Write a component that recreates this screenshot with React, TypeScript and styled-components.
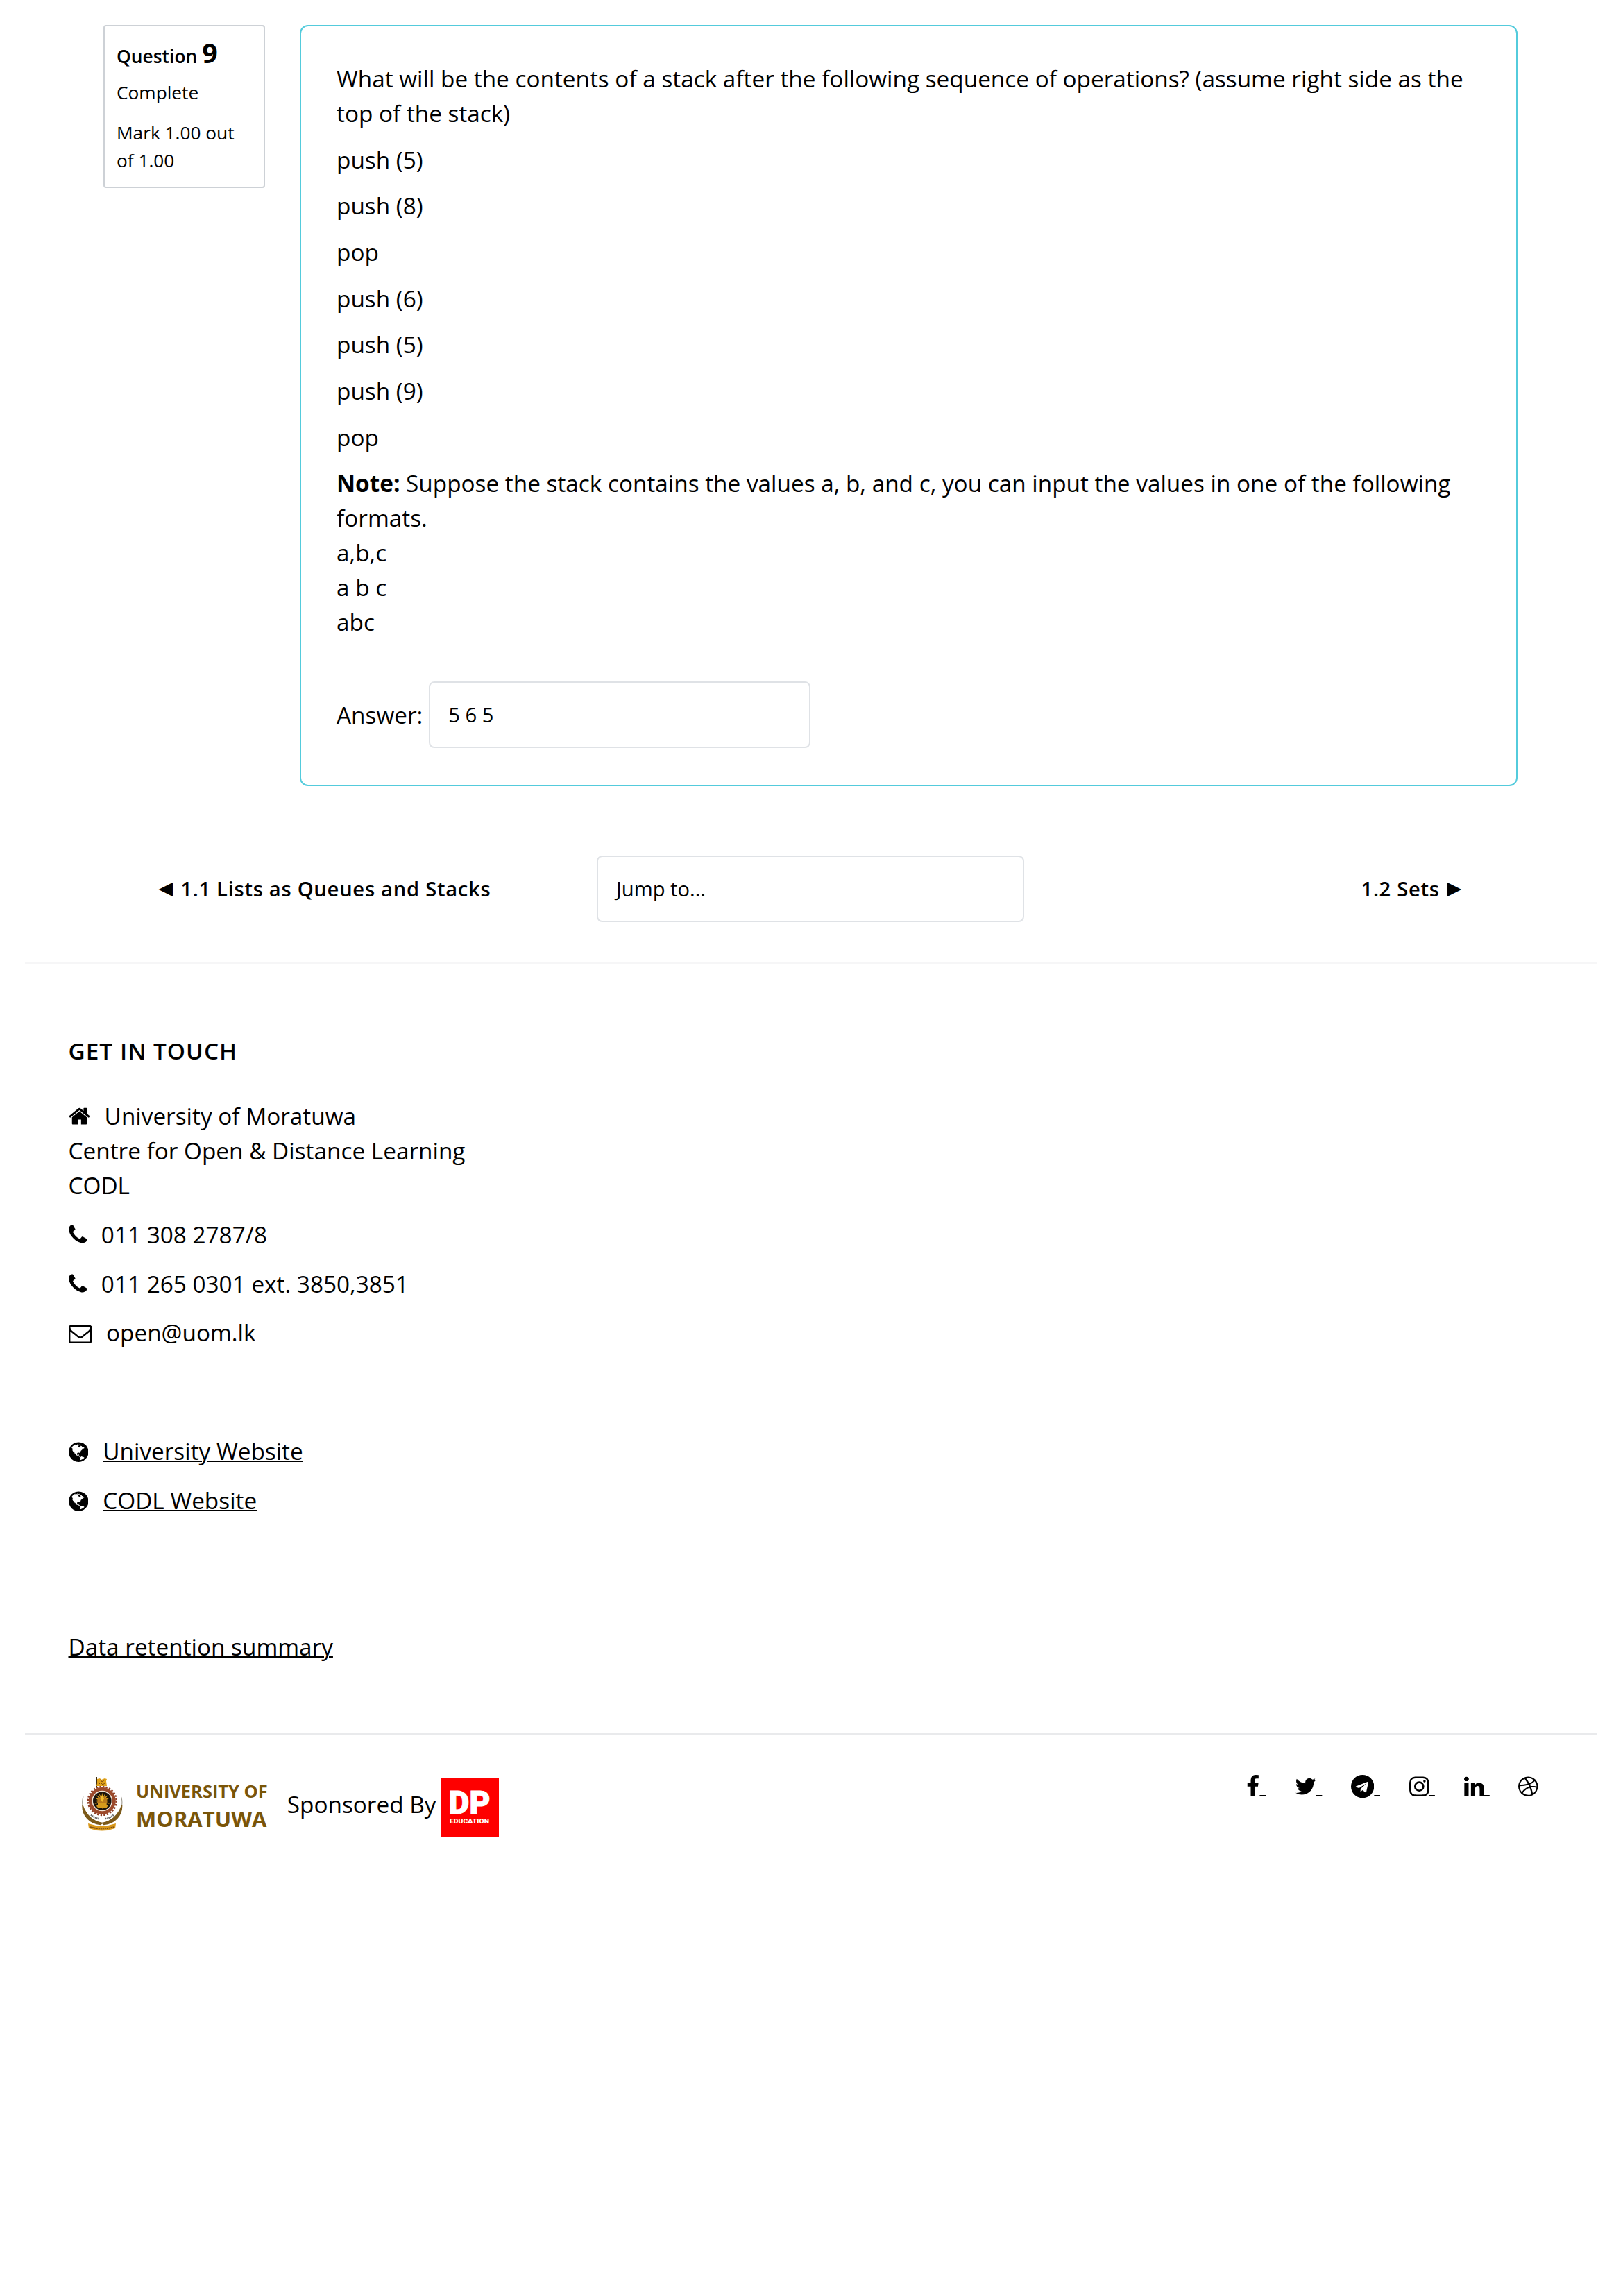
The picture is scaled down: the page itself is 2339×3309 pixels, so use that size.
import React from 'react';
import styled, { createGlobalStyle } from 'styled-components';

const GlobalStyle = createGlobalStyle`
  *, *::before, *::after { box-sizing: border-box; }
  body {
    margin: 0;
    background: #fff;
    color: #000;
    font-family: "Open Sans", "Noto Sans", sans-serif;
    font-size: 33.333px;
    line-height: 50px;
  }
  p, h2 { margin: 0; }
`;

const Page = styled.div`
  width: 2339px;
  min-height: 3309px;
  padding: 36px 38px 0 36px;
  background: #fff;
`;

const QuestionRow = styled.section`
  display: flex;
  align-items: flex-start;
  gap: 50px;
  padding-left: 113px;
`;

const InfoCard = styled.aside`
  width: 233px;
  height: 235px;
  padding: 15px 17px;
  border: 2px solid #cdd1d6;
  border-radius: 4px;
  font-size: 26.25px;
  line-height: 39.375px;
`;

const QuestionTitle = styled.h2`
  font-size: 26.4px;
  line-height: 46px;
  font-weight: 600;
`;

const QuestionNumber = styled.span`
  font-size: 39.375px;
  font-weight: 700;
`;

const InfoText = styled.p<{ $top: number }>`
  margin-top: ${(p) => p.$top}px;
`;

const Formulation = styled.div`
  width: 1755px;
  height: 1097px;
  padding: 50px 49px 50px 51px;
  border: 2.5px solid #53cbdc;
  border-radius: 12px;
`;

const Paragraph = styled.p`
  margin-bottom: 16.67px;
`;

const AnswerRow = styled.div`
  display: flex;
  align-items: center;
  gap: 9px;
  margin-top: 61px;
`;

const Field = styled.div<{ $width: number; $size: number }>`
  display: flex;
  align-items: center;
  width: ${(p) => p.$width}px;
  height: 96px;
  padding: 0 26px;
  border: 2px solid #dfe2e6;
  border-radius: 8px;
  font-size: ${(p) => p.$size}px;
`;

const ActivityNav = styled.nav`
  display: flex;
  align-items: center;
  margin-top: 100px;
  padding: 0 192px 0 190px;
  font-size: 29.167px;
`;

const NavSide = styled.div<{ $end?: boolean }>`
  flex: ${(p) => (p.$end ? '1' : '0 0 634px')};
  text-align: ${(p) => (p.$end ? 'right' : 'left')};
  font-weight: 600;
  letter-spacing: 0.72px;
  white-space: nowrap;
`;

const Arrow = styled.span`
  display: inline-block;
  width: 26px;
  font-family: "DejaVu Sans", sans-serif;
  font-size: 27px;
  font-weight: 400;
  line-height: 30px;
  vertical-align: 3px;
  text-align: center;
  letter-spacing: 0;
`;

const Rule = styled.hr<{ $top: number; $color: string }>`
  height: 2px;
  margin: ${(p) => p.$top}px 0 0;
  border: 0;
  background: ${(p) => p.$color};
`;

const Contact = styled.section`
  padding: 100px 0 0 62.5px;
`;

const ContactTitle = styled.h2`
  font-size: 33.333px;
  line-height: 50px;
  font-weight: 600;
  letter-spacing: 1.04px;
  margin-bottom: 44px;
`;

const ContactLine = styled.p<{ $gap?: number }>`
  margin-bottom: ${(p) => p.$gap ?? 20.83}px;
`;

const TextLink = styled.a`
  text-decoration: underline;
  text-decoration-thickness: 2px;
`;

const Glyph = styled.svg<{ $lead?: boolean }>`
  display: inline-block;
  height: 33.333px;
  vertical-align: -4.76px;
  margin-right: ${(p) => (p.$lead ? 12.5 : 0)}px;
  fill: currentColor;
`;

const Bottom = styled.footer`
  display: flex;
  justify-content: space-between;
  align-items: flex-start;
  padding: 48px 84px 0 82px;
`;

const Brand = styled.div`
  display: flex;
  align-items: center;
  height: 100px;
  margin-top: 2px;
`;

const UomText = styled.div`
  display: flex;
  flex-direction: column;
  margin: 2px 28px 0 18px;
  color: #7a5509;
  font-weight: 700;
  line-height: 40px;
`;

const UomTop = styled.span`
  font-size: 25.45px;
`;

const UomBottom = styled.span`
  font-size: 31px;
`;

const Sponsor = styled.span`
  margin-right: 7px;
`;

const DpFrame = styled.div`
  display: flex;
  margin-top: 8px;
`;

const Social = styled.div`
  display: flex;
  gap: 41.67px;
`;

const SocialLink = styled.a`
  white-space: pre;
  text-decoration: underline;
  text-decoration-thickness: 2px;
`;

type GlyphSpec = { x: number; w: number; d: string };

const glyphs: Record<string, GlyphSpec> = {
  home: { x: 64, w: 1664, d: 'M1472 992v480q0 26-19 45t-45 19h-384v-384h-256v384h-384q-26 0-45-19t-19-45v-480q0-1 .5-3t.5-3l575-474 575 474q1 2 1 6zm223-69l-62 74q-8 9-21 11h-3q-13 0-21-7l-692-577-692 577q-12 8-24 7-13-2-21-11l-62-74q-8-10-7-23.5t11-21.5l719-599q32-26 76-26t76 26l244 204v-195q0-14 9-23t23-9h192q14 0 23 9t9 23v408l219 182q10 8 11 21.5t-7 23.5z' },
  phone: { x: 192, w: 1408, d: 'M1600 1240q0 27-10 70.5t-21 68.5q-21 50-122 106-94 51-186 51-27 0-53-3.5t-57.5-12.5-47-14.5-55.5-20.5-49-18q-98-35-175-83-127-79-264-216t-216-264q-48-77-83-175-3-9-18-49t-20.5-55.5-14.5-47-12.5-57.5-3.5-53q0-92 51-186 56-101 106-122 25-11 68.5-21t70.5-10q14 0 21 3 18 6 53 76 11 19 30 54t35 63.5 31 53.5q3 4 17.5 25t21.5 35.5 7 28.5q0 20-28.5 50t-62 55-62 53-28.5 46q0 9 5 22.5t8.5 20.5 14 24 11.5 19q76 137 174 235t235 174q2 1 19 11.5t24 14 20.5 8.5 22.5 5q18 0 46-28.5t53-62 55-62 50-28.5q14 0 28.5 7t35.5 21.5 25 17.5q25 15 53.5 31t63.5 35 54 30q70 35 76 53 3 7 3 21z' },
  envelope: { x: 0, w: 1792, d: 'M1664 1504v-768q-32 36-69 66-268 206-426 338-51 43-83 67t-86.5 48.5-102.5 24.5h-2q-48 0-102.5-24.5t-86.5-48.5-83-67q-158-132-426-338-37-30-69-66v768q0 13 9.5 22.5t22.5 9.5h1472q13 0 22.5-9.5t9.5-22.5zm0-1051v-24.5l-.5-13-3-12.5-5.5-9-9-7.5-14-2.5h-1472q-13 0-22.5 9.5t-9.5 22.5q0 168 147 284 193 152 401 317 6 5 35 29.5t46 37.5 44.5 31.5 50.5 27.5 43 9h2q20 0 43-9t50.5-27.5 44.5-31.5 46-37.5 35-29.5q208-165 401-317 54-43 100.5-115.5t46.5-131.5zm128-37v1088q0 66-47 113t-113 47h-1472q-66 0-113-47t-47-113v-1088q0-66 47-113t113-47h1472q66 0 113 47t47 113z' },
  globe: { x: 128, w: 1536, d: 'M896 128q209 0 385.5 103t279.5 279.5 103 385.5-103 385.5-279.5 279.5-385.5 103-385.5-103-279.5-279.5-103-385.5 103-385.5 279.5-279.5 385.5-103zm274 521q-2 1-9.5 9.5t-13.5 9.5q2 0 4.5-5t5-11 3.5-7q6-7 22-15 14-6 52-12 34-8 51 11-2-2 9.5-13t14.5-12q3-2 15-4.5t15-7.5l2-22q-12 1-17.5-7t-6.5-21q0 2-6 8 0-7-4.5-8t-11.5 1-9 1q-10-3-15-7.5t-8-16.5-4-15q-2-5-9.5-10.5t-9.5-10.5q-1-2-2.5-5.5t-3-6.5-4-5.5-5.5-2.5-7 5-7.5 10-4.5 5q-3-2-6-1.5t-4.5 1-4.5 3-5 3.5q-3 2-8.5 3t-8.5 2q15-5-1-11-10-4-16-3 9-4 7.5-12t-8.5-14h5q-1-4-8.5-8.5t-17.5-8.5-13-6q-8-5-34-9.5t-33-.5q-5 6-4.5 10.5t4 14 3.5 12.5q1 6-5.5 13t-6.5 12q0 7 14 15.5t10 21.5q-3 8-16 16t-16 12q-5 8-1.5 18.5t10.5 16.5q2 2 1.5 4t-3.5 4.5-5.5 4-6.5 3.5l-3 2q-11 5-20.5-6t-13.5-26q-7-25-16-30-23-8-29 1-5-13-41-26-25-9-58-4 6-1 0-15-7-15-19-12 3-6 4-17.5t1-13.5q3-13 12-23 1-1 7-8.5t9.5-13.5.5-6q35 4 50-11 5-5 11.5-17t10.5-17q9-6 14-5.5t14.5 5.5 14.5 5q14 1 15.5-11t-7.5-20q12 1 3-17-4-7-8-9-12-4-27 5-8 4 2 8-1-1-9.5 10.5t-16.5 17.5-16-5q-1-1-5.5-13.5t-9.5-13.5q-8 0-16 15 3-8-11-15t-24-8q19-12-8-27-7-4-20.5-5t-19.5 4q-5 7-5.5 11.5t5 8 10.5 5.5 11.5 4 8.5 3q14 10 8 14-2 1-8.5 3.5t-11.5 4.5-6 4q-3 4 0 14t-2 14q-5-5-9-17.5t-7-16.5q7 9-25 6l-10-1q-4 0-16 2t-20.5 1-13.5-8q-4-8 0-20 1-4 4-2-4-3-11-9.5t-10-8.5q-46 15-94 41 6 1 12-1 5-2 13-6.5t10-5.5q34-14 42-7l5-5q14 16 20 25-7-4-30-1-20 6-22 12 7 12 5 18-4-3-11.5-10t-14.5-11-15-5q-16 0-22 1-146 80-235 222 7 7 12 8 4 1 5 9t2.5 11 11.5-3q9 8 3 19 1-1 44 27 19 17 21 21 3 11-10 18-1-2-9-9t-9-4q-3 5 .5 18.5t10.5 12.5q-7 0-9.5 16t-2.5 35.5-1 23.5l2 1q-3 12 5.5 34.5t21.5 19.5q-13 3 20 43 6 8 8 9 3 2 12 7.5t15 10 10 10.5q4 5 10 22.5t14 23.5q-2 6 9.5 20t10.5 23q-1 0-2.5 1t-2.5 1q3 7 15.5 14t15.5 13q1 3 2 10t3 11 8 2q2-20-24-62-15-25-17-29-3-5-5.5-15.5t-4.5-14.5q2 0 6 1.5t8.5 3.5 7.5 4 2 3q-3 7 2 17.5t12 18.5 17 19 12 13q6 6 14 19.5t0 13.5q9 0 20 10.5t17 19.5q5 8 8 26t5 24q2 7 8.5 13.5t12.5 9.5l16 8 13 7q5 2 18.5 10.5t21.5 11.5q10 4 16 4t14.5-2.5 13.5-3.5q15-2 29 15t21 21q36 19 55 11-2 1 .5 7.5t8 15.5 9 14.5 5.5 8.5q5 6 18 15t18 15q6-4 7-9-3 8 7 20t18 10q14-3 14-32-31 15-49-18 0-1-2.5-5.5t-4-8.5-2.5-8.5 0-7.5 5-3q9 0 10-3.5t-2-12.5-4-13q-1-8-11-20t-12-15q-5 9-16 8t-16-9q0 1-1.5 5.5t-1.5 6.5q-13 0-15-1 1-3 2.5-17.5t3.5-22.5q1-4 5.5-12t7.5-14.5 4-12.5-4.5-9.5-17.5-2.5q-19 1-26 20-1 3-3 10.5t-5 11.5-9 7q-7 3-24 2t-24-5q-13-8-22.5-29t-9.5-37q0-10 2.5-26.5t3-25-5.5-24.5q3-2 9-9.5t10-10.5q2-1 4.5-1.5t4.5 0 4-1.5 3-6q-1-1-4-3-3-3-4-3 7 3 28.5-1.5t27.5 1.5q15 11 22-2 0-1-2.5-9.5t-.5-13.5q5 27 29 9 3 3 15.5 5t17.5 5q3 2 7 5.5t5.5 4.5 5-.5 8.5-6.5q10 14 12 24 11 40 19 44 7 3 11 2t4.5-9.5 0-14-1.5-12.5l-1-8v-18l-1-8q-15-3-18.5-12t1.5-18.5 15-18.5q1-1 8-3.5t15.5-6.5 12.5-8q21-19 15-35 7 0 11-9-1 0-5-3t-7.5-5-4.5-2q9-5 2-16 5-3 7.5-11t7.5-10q9 12 21 2 7-8 1-16 5-7 20.5-10.5t18.5-9.5q7 2 8-2t1-12 3-12q4-5 15-9t13-5l17-11q3-4 0-4 18 2 31-11 10-11-6-20 3-6-3-9.5t-15-5.5q3-1 11.5-.5t10.5-1.5q15-10-7-16-17-5-43 12zm-163 877q206-36 351-189-3-3-12.5-4.5t-12.5-3.5q-18-7-24-8 1-7-2.5-13t-8-9-12.5-8-11-7q-2-2-7-6t-7-5.5-7.5-4.5-8.5-2-10 1l-3 1q-3 1-5.5 2.5t-5.5 3-4 3 0 2.5q-21-17-36-22-5-1-11-5.5t-10.5-7-10-1.5-11.5 7q-5 5-6 15t-2 13q-7-5 0-17.5t2-18.5q-3-6-10.5-4.5t-12 4.5-11.5 8.5-9 6.5-8.5 5.5-8.5 7.5q-3 4-6 12t-5 11q-2-4-11.5-6.5t-9.5-5.5q2 10 4 35t5 38q7 31-12 48-27 25-29 40-4 22 12 26 0 7-8 20.5t-7 21.5q0 6 2 16z' },
  facebook: { x: 384, w: 1024, d: 'M1343 12v264h-157q-86 0-116 36t-30 108v189h293l-39 296h-254v759h-306v-759h-255v-296h255v-218q0-186 104-288.5t277-102.5q147 0 228 12z' },
  twitter: { x: 64, w: 1664, d: 'M1684 408q-67 98-162 167 1 14 1 42 0 130-38 259.5t-115.5 248.5-184.5 210.5-258 146-323 54.5q-271 0-496-145 35 4 78 4 225 0 401-138-105-2-188-64.5t-114-159.5q33 5 61 5 43 0 85-11-112-23-185.5-111.5t-73.5-205.5v-4q68 38 146 41-66-44-105-115t-39-154q0-88 44-163 121 149 294.5 238.5t371.5 99.5q-8-38-8-74 0-134 94.5-228.5t228.5-94.5q140 0 236 102 109-21 205-78-37 115-142 178 93-10 186-50z' },
  telegram: { x: 0, w: 1792, d: 'M1189 1307l147-693q9-44-10.5-63t-51.5-7l-864 333q-29 11-39.5 25t-2.5 26.5 32 19.5l221 69 513-323q21-14 32-6 7 5-4 15l-415 375-16 228q23 0 45-22l108-104 224 165q64 36 81-38zm603-411q0 182-71 348t-191 286-286 191-348 71-348-71-286-191-191-286-71-348 71-348 191-286 286-191 348-71 348 71 286 191 191 286 71 348z' },
  instagram: { x: 128, w: 1536, d: 'M1152 896q0-106-75-181t-181-75-181 75-75 181 75 181 181 75 181-75 75-181zm138 0q0 164-115 279t-279 115-279-115-115-279 115-279 279-115 279 115 115 279zm108-410q0 38-27 65t-65 27-65-27-27-65 27-65 65-27 65 27 27 65zm-502-220q-7 0-76.5-.5t-105.5 0-96.5 3-103 10-71.5 18.5q-50 20-88 58t-58 88q-11 29-18.5 71.5t-10 103-3 96.5 0 105.5.5 76.5-.5 76.5 0 105.5 3 96.5 10 103 18.5 71.5q20 50 58 88t88 58q29 11 71.5 18.5t103 10 96.5 3 105.5 0 76.5-.5 76.5.5 105.5 0 96.5-3 103-10 71.5-18.5q50-20 88-58t58-88q11-29 18.5-71.5t10-103 3-96.5 0-105.5-.5-76.5.5-76.5 0-105.5-3-96.5-10-103-18.5-71.5q-20-50-58-88t-88-58q-29-11-71.5-18.5t-103-10-96.5-3-105.5 0-76.5.5zm768 630q0 229-5 317-10 208-124 322t-322 124q-88 5-317 5t-317-5q-208-10-322-124t-124-322q-5-88-5-317t5-317q10-208 124-322t322-124q88-5 317-5t317 5q208 10 322 124t124 322q5 88 5 317z' },
  linkedin: { x: 128, w: 1536, d: 'M477 625v991h-330v-991h330zm21-306q1 73-50.5 122t-135.5 49h-2q-82 0-132-49t-50-122q0-74 51.5-122.5t134.5-48.5 133 48.5 51 122.5zm1166 729v568h-329v-530q0-105-40.5-164.5t-126.5-59.5q-63 0-105.5 34.5t-63.5 85.5q-11 30-11 81v553h-329q2-399 2-647t-1-296l-1-48h329v144h-2q20-32 41-56t56.5-52 87-43.5 114.5-15.5q171 0 275 113.5t104 332.5z' },
  dribbble: { x: 128, w: 1536, d: 'M1152 1500q-42-241-140-498h-2l-2 1q-16 6-43 16.5t-101 49-137 82-131 114.5-103 148l-15-11q184 150 418 150 132 0 256-52zm-185-607q-21-49-53-111-311 93-673 93-1 7-1 21 0 124 44 236.5t124 201.5q50-89 123.5-166.5t142.5-124.5 130.5-81 99.5-48l37-13q4-1 13-3.5t13-4.5zm-107-212q-120-213-244-378-138 65-234 186t-128 272q302 0 606-80zm684 319q-210-60-409-29 87 239 128 469 111-75 185-189.5t96-250.5zm-805-741q-1 0-2 1 1-1 2-1zm590 145q-185-164-433-164-76 0-155 19 131 170 246 382 69-26 130-60.5t96.5-61.5 65.5-57 37.5-40.5zm223 485q-3-232-149-410l-1 1q-9 12-19 24.5t-43.5 44.5-71 60.5-100 65-131.5 64.5q25 53 44 95 2 5 6.5 17t7.5 17q36-5 74.5-7t73.5-2 69 1.5 64 4 56.5 5.5 48 6.5 36.5 6 25 4.5zm112 7q0 209-103 385.5t-279.5 279.5-385.5 103-385.5-103-279.5-279.5-103-385.5 103-385.5 279.5-279.5 385.5-103 385.5 103 279.5 279.5 103 385.5z' },
};

function Icon({ name, lead }: { name: string; lead?: boolean }) {
  const g = glyphs[name];
  return (
    <Glyph $lead={lead} viewBox={`${g.x} 0 ${g.w} 1792`} width={(g.w / 1792) * 33.333} aria-hidden="true">
      <path d={g.d} />
    </Glyph>
  );
}

function Crest() {
  const rays = Array.from({ length: 16 }, (_, i) => i * 22.5);
  return (
    <svg width="60" height="80" viewBox="0 0 60 80" aria-hidden="true">
      <path d="M21.5 1v14" stroke="#3c2a10" strokeWidth="1" />
      <path d="M22 4l4-1 2 2 5-2 3 1-1 3 1 7h-15l1-4z" fill="#e0a21a" />
      <path d="M24 6l3-1 2 3 4-3M24 12l3-3 3 3 3-2" stroke="#7c4d12" strokeWidth="1" fill="none" />
      <circle cx="29.3" cy="35.5" r="20.4" fill="none" stroke="#8f3f26" strokeWidth="2.6" strokeDasharray="2.4 2.18" />
      <circle cx="29.3" cy="35.5" r="17" fill="none" stroke="#9c4a2c" strokeWidth="5" />
      <circle cx="29.3" cy="35.5" r="14" fill="#1b130b" stroke="#eee6d8" strokeWidth="1.4" />
      {rays.map((a) => (
        <path key={a} d="M29.3 23.5l1.2 7h-2.4z" fill="#d69a1c" transform={`rotate(${a} 29.3 35.5)`} />
      ))}
      <circle cx="29.3" cy="36" r="7" fill="#b9791a" />
      <path d="M23 38h12.6v3h-12.6zM21 42h16.6l-2 3.5h-12.6z" fill="#d69a1c" />
      <path d="M29.3 27l2.8 5-2.8 5-2.8-5z" fill="#f0bc2c" />
      <path d="M1 42C1 57 11 68 27 69.500l2-2C16 65 6 56 1 42z" fill="#7c5a1a" stroke="#7c5a1a" strokeWidth="1.6" />
      <path d="M57.600 42c0 15-10 26-26 27.500l-2-2c13-2.500 23-11.500 28-25.500z" fill="#7c5a1a" stroke="#7c5a1a" strokeWidth="1.6" />
      <path d="M1 42C.3 37 .8 33 2 29.5M57.6 42c.7-5 .2-9-1-12.500" stroke="#8a8477" strokeWidth=".9" fill="none" />
      <path d="M13 55.500q6 5 12 5.500M34 61q6-.5 12-5.500" stroke="#666" strokeWidth="2.4" strokeDasharray="1.5 .8" fill="none" />
      <path d="M9 68q20 7 40 0l-1 7q-19 7-38 0z" fill="#d8981c" />
      <path d="M12 73q17 5 34 0" stroke="#7c4d12" strokeWidth="1.8" strokeDasharray="2 1" fill="none" />
    </svg>
  );
}

function DpLogo() {
  return (
    <svg width="84" height="85" viewBox="0 0 84 85">
      <rect width="84" height="85" fill="#fe0000" />
      <g fill="#fff" fontFamily="Roboto, sans-serif" fontWeight="900">
        <text x="11.5" y="52" fontSize="47" textLength="60" lengthAdjust="spacingAndGlyphs" stroke="#fff" strokeWidth="1">DP</text>
        <text x="13" y="66" fontSize="9.8" textLength="57" lengthAdjust="spacingAndGlyphs">EDUCATION</text>
      </g>
    </svg>
  );
}

const operations = ['push (5)', 'push (8)', 'pop', 'push (6)', 'push (5)', 'push (9)', 'pop'];
const socials = ['facebook', 'twitter', 'telegram', 'instagram', 'linkedin', 'dribbble'];

export default function App() {
  return (
    <>
      <GlobalStyle />
      <Page>
        <QuestionRow>
          <InfoCard>
            <QuestionTitle>
              Question <QuestionNumber>9</QuestionNumber>
            </QuestionTitle>
            <InfoText $top={10}>Complete</InfoText>
            <InfoText $top={19}>Mark 1.00 out of 1.00</InfoText>
          </InfoCard>
          <Formulation>
            <Paragraph>
              What will be the contents of a stack after the following sequence of operations? (assume right side as the top of the stack)
            </Paragraph>
            {operations.map((op, i) => (
              <Paragraph key={i}>{op}</Paragraph>
            ))}
            <Paragraph>
              <b>Note:</b> Suppose the stack contains the values a, b, and c, you can input the values in one of the following formats.
              <br />
              a,b,c
              <br />
              a b c
              <br />
              abc
            </Paragraph>
            <AnswerRow>
              <span>Answer:</span>
              <Field $width={550} $size={29.167}>5 6 5</Field>
            </AnswerRow>
          </Formulation>
        </QuestionRow>

        <ActivityNav>
          <NavSide>
            <Arrow>◀</Arrow> 1.1 Lists as Queues and Stacks
          </NavSide>
          <Field $width={616} $size={29.167}>Jump to...</Field>
          <NavSide $end>
            1.2 Sets <Arrow>▶</Arrow>
          </NavSide>
        </ActivityNav>

        <Rule $top={58} $color="#f6f6f7" />

        <Contact>
          <ContactTitle>GET IN TOUCH</ContactTitle>
          <ContactLine>
            <Icon name="home" lead /> University of Moratuwa
            <br />
            Centre for Open &amp; Distance Learning
            <br />
            CODL
          </ContactLine>
          <ContactLine>
            <Icon name="phone" lead /> 011 308 2787/8
          </ContactLine>
          <ContactLine>
            <Icon name="phone" lead /> 011 265 0301 ext. 3850,3851
          </ContactLine>
          <ContactLine $gap={121}>
            <Icon name="envelope" lead /> open@uom.lk
          </ContactLine>
          <ContactLine>
            <Icon name="globe" lead /> <TextLink>University Website</TextLink>
          </ContactLine>
          <ContactLine $gap={161}>
            <Icon name="globe" lead /> <TextLink>CODL Website</TextLink>
          </ContactLine>
          <TextLink>Data retention summary</TextLink>
        </Contact>

        <Rule $top={100} $color="#e9eaec" />

        <Bottom>
          <Brand>
            <Crest />
            <UomText>
              <UomTop>UNIVERSITY OF</UomTop>
              <UomBottom>MORATUWA</UomBottom>
            </UomText>
            <Sponsor>Sponsored By</Sponsor>
            <DpFrame>
              <DpLogo />
            </DpFrame>
          </Brand>
          <Social>
            {socials.map((name, i) => (
              <SocialLink key={name}>
                <Icon name={name} />
                {i < socials.length - 1 ? ' ' : ''}
              </SocialLink>
            ))}
          </Social>
        </Bottom>
      </Page>
    </>
  );
}
